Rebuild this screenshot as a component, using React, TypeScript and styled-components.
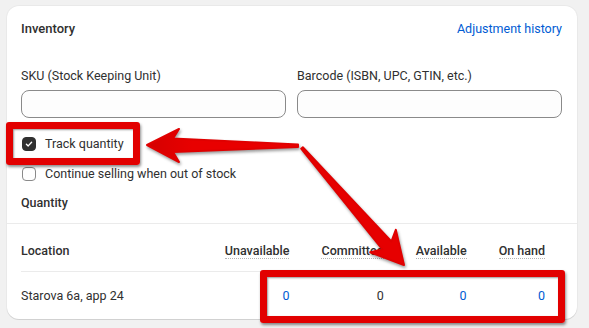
import React from 'react';
import styled, { createGlobalStyle } from 'styled-components';

const GlobalStyle = createGlobalStyle`
  body {
    margin: 0;
    background: #f1f1f1;
    font-family: Roboto, "Noto Sans", sans-serif;
    font-size: 12.5px;
    color: #303030;
  }
`;

const Page = styled.div`
  position: relative;
  width: 589px;
  height: 328px;
  padding: 6px 0 0 7px;
  box-sizing: border-box;
`;

const Card = styled.div`
  width: 570px;
  background: #fff;
  border-radius: 12px;
  box-shadow: 0 1px 0 rgba(0, 0, 0, 0.1), 0 0 0 1px rgba(0, 0, 0, 0.03);
  overflow: hidden;
`;

const Section = styled.div`
  padding: 13px 15px 10px 14px;
`;

const HeaderRow = styled.div`
  display: flex;
  justify-content: space-between;
  align-items: center;
  height: 20px;
  margin-bottom: 27px;
`;

const Title = styled.h2`
  margin: 0;
  font-size: 13px;
  font-weight: 500;
  line-height: 20px;
`;

const Link = styled.a`
  color: #005bd3;
  line-height: 20px;
  font-weight: 400;
  text-decoration: none;
`;

const Fields = styled.div`
  display: grid;
  grid-template-columns: 1fr 1fr;
  gap: 11px;
  margin-bottom: 16px;
`;

const Field = styled.label`
  display: flex;
  flex-direction: column;
  gap: 4px;
  line-height: 20px;
`;

const Input = styled.input`
  height: 28px;
  box-sizing: border-box;
  border: 1px solid #8a8a8a;
  border-radius: 8px;
  background: #fdfdfd;
  padding: 0 10px;
  font: inherit;
`;

const CheckRow = styled.label`
  display: flex;
  align-items: center;
  gap: 9px;
  height: 20px;
  line-height: 20px;
  margin-bottom: 10px;
  padding-left: 1px;
`;

const Box = styled.span<{ $checked?: boolean }>`
  width: 14px;
  height: 14px;
  box-sizing: border-box;
  border-radius: 4px;
  border: 1px solid ${(p) => (p.$checked ? '#303030' : '#8a8a8a')};
  background: ${(p) => (p.$checked ? '#303030' : '#fff')};
  display: flex;
  align-items: center;
  justify-content: center;
`;

const SubTitle = styled.div`
  font-weight: 500;
  line-height: 20px;
  margin-top: -1px;
`;

const Divider = styled.div`
  height: 1px;
  background: #ebebeb;
`;

const Table = styled.table`
  width: calc(100% - 29px);
  margin: 0 15px 0 14px;
  border-collapse: collapse;
  line-height: 20px;
`;

const Th = styled.th<{ $num?: boolean }>`
  text-align: ${(p) => (p.$num ? 'right' : 'left')};
  width: ${(p) => (p.$num ? 'auto' : '100%')};
  font-weight: 500;
  padding: 17px 0 10px ${(p) => (p.$num ? '32px' : '0')};
  white-space: nowrap;
  &:last-child {
    padding-right: 17px;
  }
`;

const Tip = styled.span`
  border-bottom: 1px dotted #b5b5b5;
`;

const Td = styled.td<{ $num?: boolean; $link?: boolean }>`
  text-align: ${(p) => (p.$num ? 'right' : 'left')};
  color: ${(p) => (p.$link ? '#005bd3' : '#303030')};
  border-top: 1px solid #ebebeb;
  padding: 14px 0 13px;
  white-space: nowrap;
  &:last-child {
    padding-right: 17px;
  }
`;

const Highlight = styled.div<{ $x: number; $y: number; $w: number; $h: number }>`
  position: absolute;
  left: ${(p) => p.$x}px;
  top: ${(p) => p.$y}px;
  width: ${(p) => p.$w}px;
  height: ${(p) => p.$h}px;
  box-sizing: border-box;
  border: 7px solid #e20000;
  border-radius: 3px;
  box-shadow: 1px 2px 3px rgba(0, 0, 0, 0.45), inset 1px 1px 2px rgba(0, 0, 0, 0.4);
  pointer-events: none;
`;

const Arrows = styled.svg`
  position: absolute;
  left: 0;
  top: 0;
  width: 589px;
  height: 328px;
  pointer-events: none;
  filter: drop-shadow(1px 2px 1.5px rgba(0, 0, 0, 0.4));
`;

const Check = () => (
  <svg width="10" height="10" viewBox="0 0 10 10">
    <path d="M2.4 5.2 L4.2 6.9 L7.6 3.2" fill="none" stroke="#fff" strokeWidth="1.4" strokeLinecap="round" strokeLinejoin="round" />
  </svg>
);

const columns = [
  { name: 'Unavailable', value: 0, link: true },
  { name: 'Committed', value: 0, link: false },
  { name: 'Available', value: 0, link: true },
  { name: 'On hand', value: 0, link: true },
];

export default function App() {
  return (
    <>
      <GlobalStyle />
      <Page>
        <Card>
          <Section>
            <HeaderRow>
              <Title>Inventory</Title>
              <Link href="#">Adjustment history</Link>
            </HeaderRow>
            <Fields>
              <Field>
                SKU (Stock Keeping Unit)
                <Input type="text" />
              </Field>
              <Field>
                Barcode (ISBN, UPC, GTIN, etc.)
                <Input type="text" />
              </Field>
            </Fields>
            <CheckRow>
              <Box $checked>
                <Check />
              </Box>
              Track quantity
            </CheckRow>
            <CheckRow>
              <Box />
              Continue selling when out of stock
            </CheckRow>
            <SubTitle>Quantity</SubTitle>
          </Section>
          <Divider />
          <Table>
            <thead>
              <tr>
                <Th>Location</Th>
                {columns.map((c) => (
                  <Th key={c.name} $num>
                    <Tip>{c.name}</Tip>
                  </Th>
                ))}
              </tr>
            </thead>
            <tbody>
              <tr>
                <Td>Starova 6a, app 24</Td>
                {columns.map((c) => (
                  <Td key={c.name} $num $link={c.link}>
                    {c.value}
                  </Td>
                ))}
              </tr>
            </tbody>
          </Table>
        </Card>

        <Highlight $x={6} $y={122} $w={134} $h={43} />
        <Highlight $x={260} $y={270} $w={305} $h={53} />

        <Arrows viewBox="0 0 589 328">
          <defs>
            <linearGradient id="shade1" x1="0" y1="0" x2="1" y2="0">
              <stop offset="0" stopColor="#d40000" />
              <stop offset="0.3" stopColor="#e80000" />
              <stop offset="1" stopColor="#e80000" />
            </linearGradient>
          </defs>
          <path
            d="M147 145 L179 129 L173 138.5 L298 144.5 L298 147 L173 152 L179 162 Z"
            fill="url(#shade1)"
            stroke="#e00000"
            strokeWidth="2"
            strokeLinejoin="round"
          />
          <path
            d="M404 265 L395.8 229.8 L391.4 241.5 L302.8 147.3 L301.2 148.7 L382.4 249.4 L370.2 252.2 Z"
            fill="#e60000"
            stroke="#e00000"
            strokeWidth="2"
            strokeLinejoin="round"
          />
        </Arrows>
      </Page>
    </>
  );
}
